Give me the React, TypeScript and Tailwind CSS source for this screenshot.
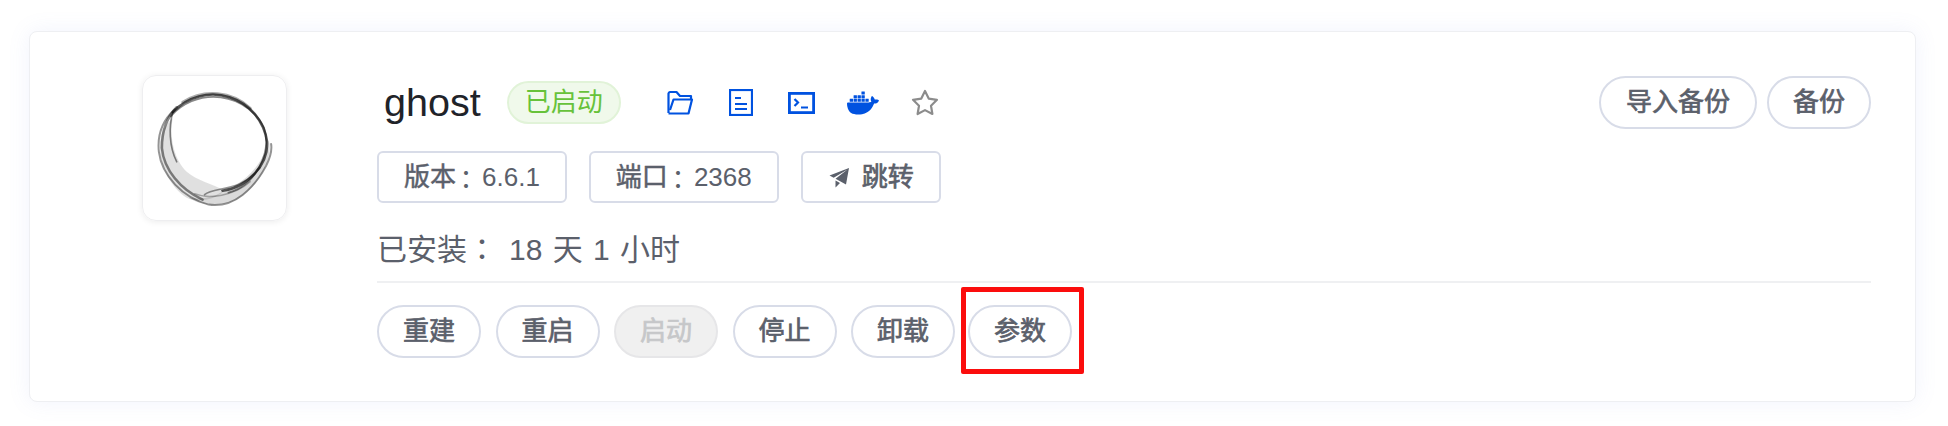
import React from "react";
import { SiDocker } from "react-icons/si";

const font = { fontFamily: '"Liberation Sans","Noto Sans CJK SC",sans-serif' };

function Colon() {
  return <span className="-ml-[3px] mr-[3px] font-['Noto_Sans_CJK_TC']">：</span>;
}

function Tag({ children }: { children: React.ReactNode }) {
  return (
    <div className="flex h-[52px] items-center justify-center rounded-[6px] border-2 border-[#d8dce8] px-[25px] text-[26px] text-[#5b606b]">
      {children}
    </div>
  );
}

function Pill({ children, disabled, wide }: { children: React.ReactNode; disabled?: boolean; wide?: boolean }) {
  return (
    <div
      className={
        "flex h-[53px] items-center justify-center rounded-full border-2 text-[26px] [-webkit-text-stroke:0.7px] " +
        (wide ? "px-[25px] " : "px-[24px] ") +
        (disabled ? "border-[#e6e6e8] bg-[#f0f0f0] text-[#c6c7c9]" : "border-[#d8dce8] bg-white text-[#5b606b]")
      }
    >
      {children}
    </div>
  );
}

function Logo() {
  return (
    <svg width="144" height="144" viewBox="0 0 144 144" fill="none" className="[filter:blur(0.7px)]">
      <path
        d="M30 42C26 62 32 84 44 96C54 105 70 108 82 115C72 124 56 128 44 122C28 112 17 90 17 70C17 58 22 48 30 42Z"
        fill="#888"
        fillOpacity="0.26"
      />
      <path
        d="M80 116C96 110 112 98 122 78C126 72 127 68 127 66C130 84 118 110 94 124C78 132 58 130 46 122C58 124 70 122 80 116Z"
        fill="#666"
        fillOpacity="0.24"
      />
      <g stroke="#111" strokeLinecap="round">
        <path d="M30 36A55 55 0 0 1 125 66C126 88 106 112 80 115" strokeWidth="2.600" strokeOpacity="0.7" />
        <path d="M28 40A56 54 0 0 1 122 52C130 78 112 110 86 117" strokeWidth="1.800" strokeOpacity="0.5" />
        <path d="M40 26A56 56 0 0 1 108 32" strokeWidth="3" strokeOpacity="0.35" />
        <path d="M32 33C20 44 14 58 16 76C19 100 40 122 66 129C92 133 112 112 124 90C128 82 130 74 129 68" strokeWidth="2" strokeOpacity="0.45" />
        <path d="M34 31C23 42 19 56 19 72C21 94 38 114 60 124" strokeWidth="2.600" strokeOpacity="0.5" />
        <path d="M30 36C26 50 26 70 34 86" strokeWidth="1.600" strokeOpacity="0.5" />
        <path d="M62 119C72 110 96 118 118 92" strokeWidth="1.600" strokeOpacity="0.45" />
        <path d="M52 118C66 124 92 120 108 106" strokeWidth="1.500" strokeOpacity="0.3" />
      </g>
    </svg>
  );
}

function FolderIcon() {
  return (
    <svg width="28" height="25" viewBox="0 0 28 25" fill="none" stroke="#0052e0" strokeWidth="2.2" strokeLinejoin="round">
      <path d="M2.500 23V3.500A2 2 0 0 1 4 2h6.500l3.500 4h11v3" />
      <path d="M2.500 23.500h20l3.500-14H7.500L4 20" />
    </svg>
  );
}

function DocIcon() {
  return (
    <svg width="24" height="27" viewBox="0 0 24 27" fill="none" stroke="#0052e0" strokeWidth="2.2">
      <rect x="1" y="1" width="22" height="25" />
      <path d="M6 9h6M6 15h12M6 20h12" />
    </svg>
  );
}

function TermIcon() {
  return (
    <svg width="27" height="22" viewBox="0 0 27 22" fill="none" stroke="#0052e0" strokeWidth="2.8">
      <rect x="1.400" y="1.400" width="24.200" height="19.200" />
      <path d="M6.500 7l3.500 3.500-3.500 3.500M13 15.500h7" strokeWidth="2.200" />
    </svg>
  );
}

function StarIcon() {
  return (
    <svg width="28" height="27" viewBox="0 0 28 27" fill="none" stroke="#8c8c8c" strokeWidth="2.2" strokeLinejoin="round">
      <path d="M14 2l3.700 7.600 8.300 1.200-6 5.900 1.400 8.300-7.400-3.900-7.400 3.900L8 16.700l-6-5.900 8.300-1.200z" />
    </svg>
  );
}

function SendIcon() {
  return (
    <svg width="24" height="24" viewBox="0 0 1024 1024" fill="#5b606b">
      <path d="m64 448 832-320-128 704-446.080-243.328L832 192 242.816 545.472zm256 512V657.024L512 768z" />
    </svg>
  );
}

const cjkMedium = "[-webkit-text-stroke:0.5px]";

export default function App() {
  return (
    <div className="min-h-[426px] bg-white pl-[29px] pr-[32px] pt-[31px]" style={font}>
      <div className="flex h-[371px] rounded-[8px] border border-[#eeeff2] bg-white pt-[44px] shadow-[0_0_22px_rgba(120,140,230,0.10)]">
        <div className="w-[347px] pl-[112px]">
          <div className="-mt-[1px] flex h-[146px] w-[145px] items-center justify-center rounded-[14px] border border-[#eeeef0] shadow-[0_1px_6px_rgba(0,0,0,0.08)]">
            <Logo />
          </div>
        </div>
        <div className="flex flex-1 flex-col pr-[44px]">
          <div className="flex h-[53px] items-center justify-between">
            <div className="flex items-center">
              <span className="ml-[7px] text-[39.500px] leading-none text-[#1f2329]">ghost</span>
              <span className="ml-[26px] flex h-[43px] w-[114px] items-center justify-center rounded-full border-2 border-[#e1f3d8] bg-[#f0f9eb] text-[26px] text-[#67c23a]">
                已启动
              </span>
              <div className="ml-[45px] flex items-center gap-[35px]">
                <FolderIcon />
                <DocIcon />
                <TermIcon />
                <span className="-mx-[3px] text-[#0052e0]">
                  <SiDocker size={32} />
                </span>
                <StarIcon />
              </div>
            </div>
            <div className="flex gap-[10px]">
              <Pill wide>导入备份</Pill>
              <Pill>备份</Pill>
            </div>
          </div>
          <div className="mt-[22px] flex gap-[22px]">
            <Tag>
              <span className={cjkMedium}>版本</span>
              <Colon />
              6.6.1
            </Tag>
            <Tag>
              <span className={cjkMedium}>端口</span>
              <Colon />
              2368
            </Tag>
            <Tag>
              <span className="mr-[10px]">
                <SendIcon />
              </span>
              <span className="[-webkit-text-stroke:0.7px]">跳转</span>
            </Tag>
          </div>
          <div className="mt-[24px] text-[30px] leading-[40px] text-[#5b606b]">
            已安装
            <span className="font-['Noto_Sans_CJK_TC']">：</span>
            <span className="ml-[12px] [word-spacing:2px]">18 天 1 小时</span>
          </div>
          <div className="mt-[11px] h-[2px] bg-[#eff0f2]" />
          <div className="mt-[22px] flex gap-[14.500px]">
            <Pill>重建</Pill>
            <Pill>重启</Pill>
            <Pill disabled>启动</Pill>
            <Pill>停止</Pill>
            <Pill>卸载</Pill>
            <div className="relative -ml-[1.500px]">
              <Pill>参数</Pill>
              <div className="absolute -left-[7px] -right-[12px] -top-[18px] -bottom-[16px] rounded-[2px] border-[5px] border-[#fb0d0d]" />
            </div>
          </div>
        </div>
      </div>
    </div>
  );
}
